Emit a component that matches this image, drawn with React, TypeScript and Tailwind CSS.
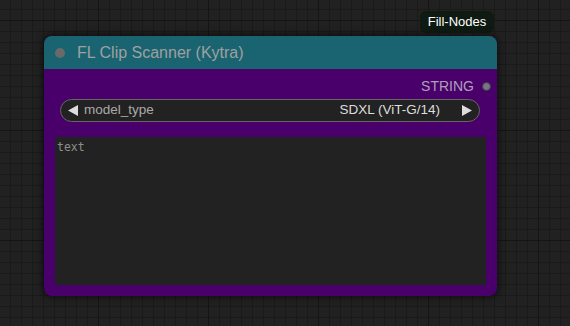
import React from "react";

export default function App() {
  return (
    <div className="relative w-[570px] h-[326px] overflow-hidden bg-[#212121]" style={{ fontFamily: '"Liberation Sans", Arial, sans-serif' }}>
      <svg className="absolute inset-0" width="570" height="326">
        <defs>
          <pattern id="minor" x="10" y="9" width="11" height="11" patternUnits="userSpaceOnUse">
            <path d="M0 0.5 H11 M0.5 0 V11" stroke="#1a1a1a" strokeWidth="1" fill="none" />
          </pattern>
          <pattern id="major" x="98" y="240" width="110" height="110" patternUnits="userSpaceOnUse">
            <path d="M0 0.5 H110 M0.5 0 V110" stroke="#151515" strokeWidth="1" fill="none" />
          </pattern>
        </defs>
        <rect width="570" height="326" fill="url(#minor)" />
        <rect width="570" height="326" fill="url(#major)" />
      </svg>

      <div className="absolute left-[420px] top-[11px] w-[74px] h-[22px] rounded-[6px] bg-[#0f1a12] text-[13px] text-white flex items-center justify-center">
        Fill-Nodes
      </div>

      <div className="absolute left-[44px] top-[36px] w-[453px] h-[260px] rounded-[8px] bg-[#4a006b] shadow-[0_0_6px_2px_rgba(0,0,0,0.5)] flex flex-col">
        <div className="h-[33px] rounded-t-[8px] bg-[#196470] flex items-center">
          <div className="ml-[11px] w-[10px] h-[10px] rounded-full bg-[#6a6a6a]" />
          <div className="ml-[12px] text-[16px] text-[#a0a0a0]">FL Clip Scanner (Kytra)</div>
        </div>
        <div className="mt-[7px] h-[20px] flex items-center justify-end pr-[6px]">
          <span className="text-[14px] text-[#aaa0b8]">STRING</span>
          <div className="ml-[8px] w-[9px] h-[9px] rounded-full bg-[#777784] border border-[#3a3a44]" />
        </div>
        <div className="mt-[3px] ml-[16px] mr-[17px] h-[23px] rounded-full bg-[#222222] border border-[#666666] flex items-center pl-[7px] pr-[7px] text-[13.5px]">
          <svg width="10" height="11" viewBox="0 0 10 11"><path d="M0 5.5 L10 0 L10 11 Z" fill="#dddddd" /></svg>
          <span className="ml-[6px] text-[#aaaaaa]">model_type</span>
          <span className="ml-auto text-[#dddddd]">SDXL (ViT-G/14)</span>
          <svg className="ml-[22px]" width="10" height="11" viewBox="0 0 10 11"><path d="M10 5.5 L0 0 L0 11 Z" fill="#dddddd" /></svg>
        </div>
        <div className="mt-[15px] ml-[11px] mr-[11px] h-[148px] bg-[#222222] pl-[2px] pt-[2px] leading-[14px]">
          <span className="text-[11.5px] text-[#8c8c8c]" style={{ fontFamily: '"DejaVu Sans Mono", "Liberation Mono", monospace' }}>text</span>
        </div>
      </div>
    </div>
  );
}
